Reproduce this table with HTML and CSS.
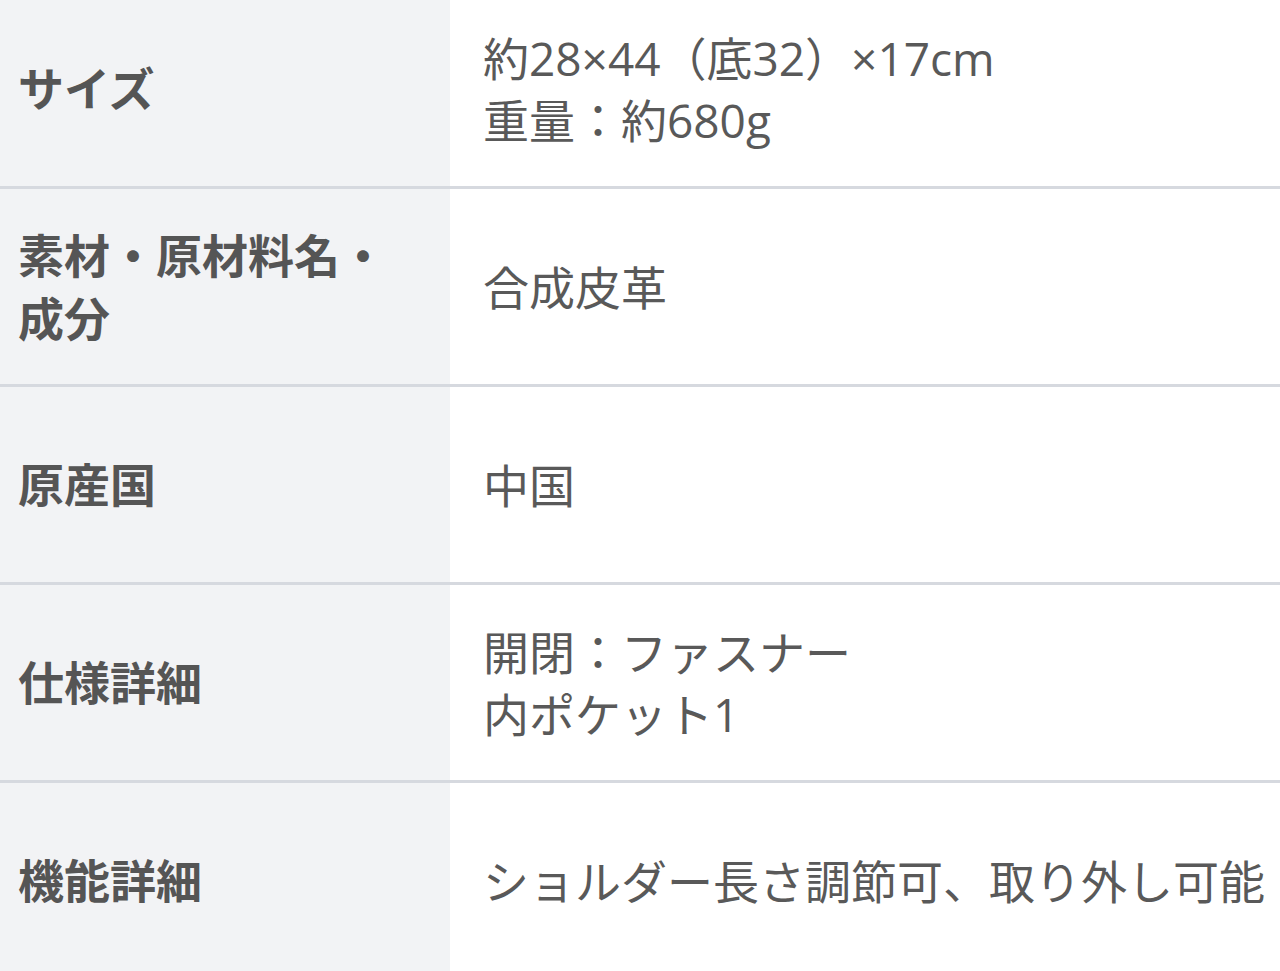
FILE: index.html
```html
<!DOCTYPE html>
<html lang="ja">
<head>
<meta charset="utf-8">
<link rel="stylesheet" href="styles.css">
</head>
<body>
<div class="spec">
  <div class="row">
    <div class="label">サイズ</div>
    <div class="value">約28×44（底32）×17cm<br>重量：約680g</div>
  </div>
  <div class="row">
    <div class="label">素材・原材料名・成分</div>
    <div class="value">合成皮革</div>
  </div>
  <div class="row">
    <div class="label">原産国</div>
    <div class="value">中国</div>
  </div>
  <div class="row">
    <div class="label">仕様詳細</div>
    <div class="value">開閉：ファスナー<br>内ポケット1</div>
  </div>
  <div class="row">
    <div class="label">機能詳細</div>
    <div class="value">ショルダー長さ調節可、取り外し可能</div>
  </div>
</div>
</body>
</html>
```
FILE: styles.css
```css
html, body {
  margin: 0;
  padding: 0;
  background: #ffffff;
  overflow: hidden;
}
body {
  font-family: "Open Sans", "Noto Sans CJK JP", sans-serif;
  color: #595959;
}
.spec {
  margin-top: -9px;
  width: 1280px;
}
.row {
  display: grid;
  grid-template-columns: 450px 1fr;
  height: 195px;
  border-bottom: 3px solid #d6d9df;
}
.label {
  background: #f2f3f5;
  display: flex;
  align-items: center;
  padding: 0 40px 0 18px;
  font-size: 46px;
  font-weight: 700;
  line-height: 63px;
  color: #555555;
}
.value {
  display: flex;
  align-items: center;
  padding-left: 33px;
  font-size: 46px;
  line-height: 62px;
  white-space: nowrap;
}
```
